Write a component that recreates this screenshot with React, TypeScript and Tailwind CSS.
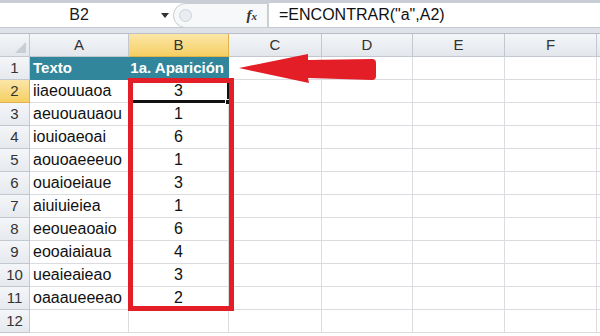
import React from 'react';

const columns = [
  { id: 'A', width: 'w-[99px]' },
  { id: 'B', width: 'w-[100px]' },
  { id: 'C', width: 'w-[93px]' },
  { id: 'D', width: 'w-[91px]' },
  { id: 'E', width: 'w-[92px]' },
  { id: 'F', width: 'w-[92px]' },
  { id: 'G', width: 'w-[40px]' }
];

const rows = [
  ['iiaeouuaoa', '3'],
  ['aeuouauaou', '1'],
  ['iouioaeoai', '6'],
  ['aouoaeeeuo', '1'],
  ['ouaioeiaue', '3'],
  ['aiuiuieiea', '1'],
  ['eeoueaoaio', '6'],
  ['eooaiaiaua', '4'],
  ['ueaieaieao', '3'],
  ['oaaaueeeao', '2'],
  ['', '']
];

const FormulaBar = () => (
  <div className="h-[34px] flex flex-col bg-[#dfe3e9]">
    <div className="h-[3px] bg-[#c9ced6]" />
    <div className="h-[25px] flex items-center bg-white border-b border-[#c3c8cf]">
      <div className="w-[158px] text-center text-[16px] text-[#1a1a1a]">B2</div>
      <div className="w-[14px] flex justify-center">
        <div className="w-0 h-0 border-l-[4px] border-r-[4px] border-t-[5px] border-l-transparent border-r-transparent border-t-[#333]" />
      </div>
      <div className="ml-[1px] w-[95px] h-[25px] flex items-center justify-between rounded-l-[14px] border border-[#c9ced5] bg-[#f7f8fa] pl-[5px] pr-[10px]">
        <div className="w-[13px] h-[13px] rounded-full border border-[#cfd3d9] bg-[#e9ecf0]" />
        <span className="text-[15px] italic font-bold font-['Liberation_Serif',serif] text-[#333]">
          f<span className="text-[11px]">x</span>
        </span>
      </div>
      <div className="flex-1 h-[25px] flex items-center pl-[10px] border-l border-[#c9ced5] text-[16px] text-[#111]">
        =ENCONTRAR("a",A2)
      </div>
    </div>
    <div className="flex-1 border-b border-[#b8bec6]" />
  </div>
);

const HeaderRow = () => (
  <div className="flex h-[23px]">
    <div className="w-[30px] shrink-0 relative bg-gradient-to-b from-[#f4f6f9] to-[#e3e7ec] border-r border-b border-[#c3c8cf]">
      <div className="absolute right-[3px] bottom-[3px] w-0 h-0 border-b-[11px] border-l-[11px] border-l-transparent border-b-[#c9ced5]" />
    </div>
    {columns.map(col => (
      <div
        key={col.id}
        className={
          col.id === 'B'
            ? `${col.width} shrink-0 flex items-center justify-center bg-gradient-to-b from-[#fbe6a6] to-[#f6cf62] border-r border-b border-[#dfb24a] text-[15px] text-[#333]`
            : `${col.width} shrink-0 flex items-center justify-center bg-gradient-to-b from-[#f4f6f9] to-[#e3e7ec] border-r border-b border-[#c3c8cf] text-[15px] text-[#333]`
        }
      >
        {col.id === 'G' ? '' : col.id}
      </div>
    ))}
  </div>
);

const RowHeader = ({ n }: { n: number }) => (
  <div
    className={
      n === 2
        ? 'w-[30px] shrink-0 flex items-center justify-center bg-gradient-to-b from-[#fbe6a6] to-[#f6cf62] border-r border-b border-[#dfb24a] text-[15px] text-[#333]'
        : 'w-[30px] shrink-0 flex items-center justify-center bg-gradient-to-b from-[#f4f6f9] to-[#e6e9ee] border-r border-b border-[#c3c8cf] text-[15px] text-[#333]'
    }
  >
    {n}
  </div>
);

const EmptyCells = () => (
  <>
    <div className="w-[93px] shrink-0 border-r border-b border-[#dadcdf]" />
    <div className="w-[91px] shrink-0 border-r border-b border-[#dadcdf]" />
    <div className="w-[92px] shrink-0 border-r border-b border-[#dadcdf]" />
    <div className="w-[92px] shrink-0 border-r border-b border-[#dadcdf]" />
    <div className="w-[40px] shrink-0 border-b border-[#dadcdf]" />
  </>
);

const App = () => {
  return (
    <div className="w-[600px] h-[336px] overflow-hidden bg-white font-['Liberation_Sans',Arial,sans-serif] relative">
      <FormulaBar />
      <HeaderRow />
      <div className="flex h-[23px]">
        <RowHeader n={1} />
        <div className="w-[99px] shrink-0 flex items-center pl-[3px] bg-[#31869b] border-b border-[#31869b] text-white font-bold text-[15px]">Texto</div>
        <div className="w-[100px] shrink-0 flex items-center justify-end pr-[4px] bg-[#31869b] border-r border-b border-[#31869b] text-white font-bold text-[15px]">1a. Aparición</div>
        <EmptyCells />
      </div>
      {rows.map((row, i) => (
        <div key={i} className="flex h-[23px]">
          <RowHeader n={i + 2} />
          <div className="w-[99px] shrink-0 flex items-center pl-[3px] border-r border-b border-[#dadcdf] text-[16px] text-[#111]">{row[0]}</div>
          <div className="w-[100px] shrink-0 flex items-center justify-center border-r border-b border-[#dadcdf] text-[16px] text-[#111]">{row[1]}</div>
          <EmptyCells />
        </div>
      ))}

      {/* selected cell B2 */}
      <div className="absolute left-[131px] top-[80px] w-[98px] h-[23px] border-r-2 border-b-[3px] border-[#111]" />
      <div className="absolute left-[225px] top-[99px] w-[6px] h-[6px] bg-[#111] border border-white" />

      {/* annotation */}
      <div className="absolute left-[128px] top-[78px] w-[106px] h-[233px] border-[5px] border-[#e41e26]" />
      <svg className="absolute left-[236px] top-[52px]" width="144" height="34" viewBox="0 0 144 34">
        <path
          d="M3 16 L72 2 L72 8 L136 7 Q140 7 140 11 L140 24 Q140 28 136 28 L72 26 L73 31 Z"
          fill="#e41e26"
        />
      </svg>
    </div>
  );
};

export default App;
